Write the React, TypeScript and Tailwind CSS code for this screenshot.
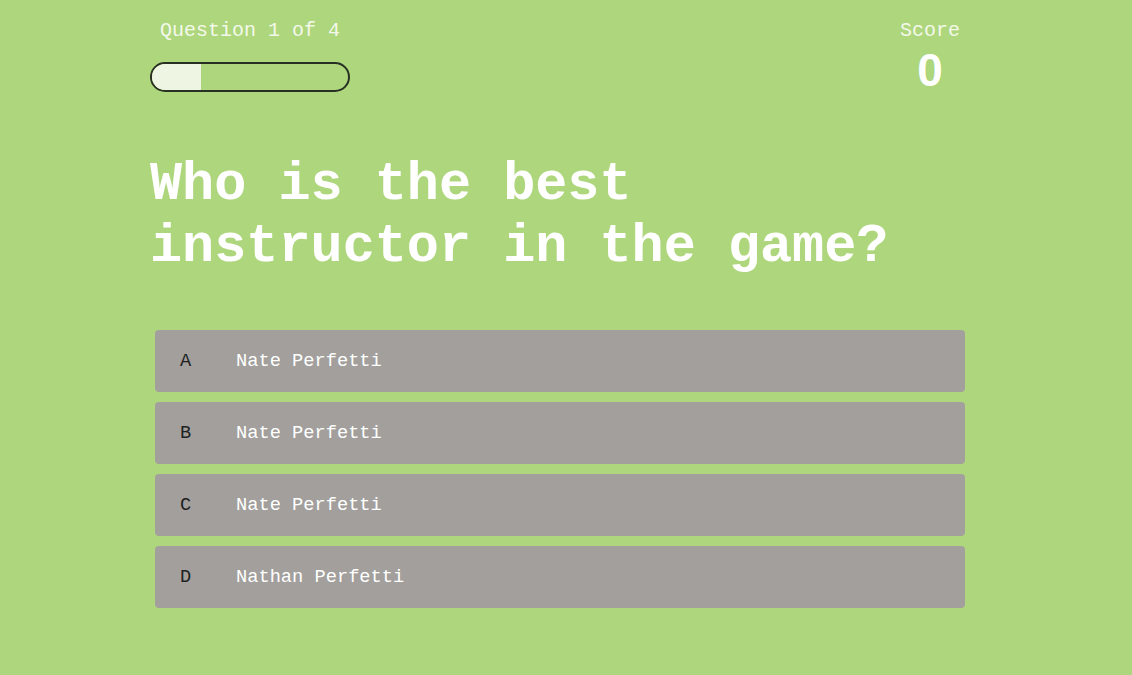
const options = [
  { letter: 'A', text: 'Nate Perfetti' },
  { letter: 'B', text: 'Nate Perfetti' },
  { letter: 'C', text: 'Nate Perfetti' },
  { letter: 'D', text: 'Nathan Perfetti' },
]

const App = () => {
  const progress = 25

  return (
    <div className="min-h-screen w-full bg-[#aed67d] font-['Courier_New','Liberation_Mono',monospace]">
      <div className="mx-auto w-[832px] pt-[19px]">
        {/* Header: progress + score */}
        <div className="flex items-start justify-between">
          <div className="flex w-[200px] flex-col items-center">
            <p className="text-[20px] leading-[24px] text-[#f3f9ea]">Question 1 of 4</p>
            <div className="mt-[19px] h-[30px] w-[200px] overflow-hidden rounded-full border-2 border-[#283023]">
              <div className="h-full bg-[#eef6e3]" style={{ width: `${progress}%` }} />
            </div>
          </div>
          <div className="mr-[22px] flex flex-col items-center">
            <p className="text-[20px] leading-[24px] text-[#f3f9ea]">Score</p>
            <p className="mt-[2px] font-['Liberation_Sans',Arial,sans-serif] text-[46px] font-bold leading-[50px] text-white">0</p>
          </div>
        </div>

        {/* Question */}
        <h1 className="mt-[59px] w-[815px] text-[53.5px] font-bold leading-[62px] text-white">
          Who is the best instructor in the game?
        </h1>

        {/* Answers */}
        <div className="mt-[52px] ml-[5px] flex w-[810px] flex-col gap-[10px]">
          {options.map((o) => (
            <button
              key={o.letter}
              className="flex h-[62px] w-full items-center rounded-[4px] bg-[#a29f9d] pl-[25px] text-left text-[18.7px]"
            >
              <span className="w-[56px] text-[#1f1f1f]">{o.letter}</span>
              <span className="text-white">{o.text}</span>
            </button>
          ))}
        </div>
      </div>
    </div>
  )
}

export default App
